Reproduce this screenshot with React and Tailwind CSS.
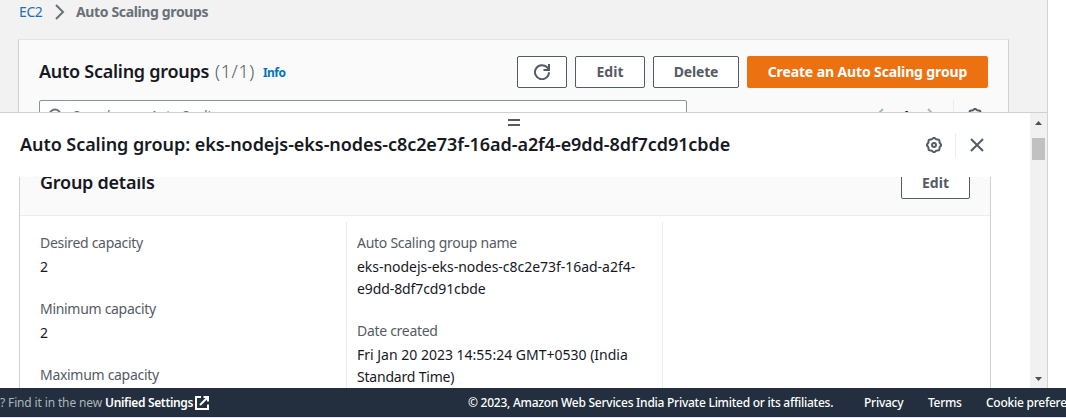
const GEAR_POINTS = Array.from({ length: 64 }, (_, i) => {
  const a = (i / 64) * Math.PI * 2;
  const r = 6.6 + 0.5 * Math.cos(a * 8);
  return `${(8 + r * Math.cos(a)).toFixed(2)},${(8 + r * Math.sin(a)).toFixed(2)}`;
}).join(" ");

function GearIcon() {
  return (
    <svg viewBox="0 0 16 16" className="size-4 shrink-0" fill="none" stroke="#545b64" strokeWidth="2">
      <polygon points={GEAR_POINTS} strokeLinejoin="round" />
      <circle cx="8" cy="8" r="2" />
    </svg>
  );
}

function CloseIcon() {
  return (
    <svg viewBox="0 0 16 16" className="size-4 shrink-0" fill="none" stroke="#545b64" strokeWidth="2">
      <path d="M2 2l12 12M14 2L2 14" />
    </svg>
  );
}

function RefreshIcon() {
  return (
    <svg viewBox="0 0 16 16" className="size-4" fill="none" stroke="#545b64" strokeWidth="2">
      <path d="M15 8.3a7 7 0 1 1-2.2-5.2L15 5.2" />
      <path d="M15 0v6H9.5" />
    </svg>
  );
}

function SearchIcon() {
  return (
    <svg viewBox="0 0 16 16" className="size-4 shrink-0" fill="none" stroke="#687078" strokeWidth="2">
      <circle cx="7" cy="7" r="5.5" />
      <path d="M11 11l4 4" />
    </svg>
  );
}

function Chevron({ className, d }) {
  return (
    <svg viewBox="0 0 16 16" className={className} fill="none" stroke="currentColor" strokeWidth="2">
      <path d={d} />
    </svg>
  );
}

function ExternalIcon() {
  return (
    <svg viewBox="0 0 16 16" className="size-4 shrink-0" fill="none" stroke="#fff" strokeWidth="2">
      <path d="M7 2H2v12h12V9.5" />
      <path d="M9.5 2H14v4.500M14 2L6 10" />
    </svg>
  );
}

function Button({ className, children }) {
  return (
    <button
      className={`flex h-8 items-center justify-center rounded-[2px] border border-[#545b64] bg-white text-sm font-bold text-[#545b64] ${className}`}
    >
      {children}
    </button>
  );
}

function Field({ label, tracking, children }) {
  return (
    <div className="leading-[22px]">
      <div className={`text-[#545b64] ${tracking}`}>{label}</div>
      <div className="mt-0.5">{children}</div>
    </div>
  );
}

export default function App() {
  return (
    <div className="flex h-[418px] w-[1066px] flex-col overflow-hidden bg-white font-['Noto_Sans','Open_Sans',sans-serif] text-sm text-[#16191f]">
      <main className="flex h-[388px] w-[1048px] flex-col border-r border-[#d0d2d3]">
        <section className="flex h-28 shrink-0 flex-col overflow-hidden bg-[#f2f2f2] pl-[18px] pr-[38px]">
          <nav className="flex h-[39px] shrink-0 items-start pl-px leading-6">
            <a className="w-[33px] tracking-[-0.4px] text-[#1f6fb5]">EC2</a>
            <Chevron className="mr-2 mt-1 size-4 text-[#687078]" d="M4 1l7 7-7 7" />
            <span className="font-bold tracking-[-0.36px] text-[#687078]">Auto Scaling groups</span>
          </nav>
          <div className="w-[991px] border border-[#e3e5e5] border-l-[#cdd1d2] border-r-[#cdd1d2] bg-[#fafafa] px-5 pt-4">
            <div className="flex h-8 items-center">
              <h1 className="mb-0.5 text-lg font-semibold tracking-[-0.27px]">Auto Scaling groups</h1>
              <span className="mb-0.5 ml-[6px] text-lg font-light tracking-[0.6px] text-[#545b64]">(1/1)</span>
              <a className="ml-2 mt-0.5 text-xs font-bold tracking-[-0.5px] text-[#0073bb]">Info</a>
              <div className="ml-auto flex gap-2">
                <Button className="w-[50px]"><RefreshIcon /></Button>
                <Button className="w-[70px]">Edit</Button>
                <Button className="w-[86px] tracking-[-0.15px]">Delete</Button>
                <button className="flex h-8 w-[241px] items-center justify-center rounded-[2px] bg-[#ec7211] font-bold tracking-[-0.12px] text-white">
                  Create an Auto Scaling group
                </button>
              </div>
            </div>
            <div className="mt-3 flex h-8">
              <div className="flex w-[648px] items-center rounded-[2px] border border-[#879596] bg-white pl-2 text-[#687078]">
                <SearchIcon />
                <span className="ml-2 italic">Search your Auto Scaling groups</span>
              </div>
              <div className="ml-auto flex items-center pr-[5px]">
                <Chevron className="size-4 text-[#aab7b8]" d="M11 1L4 8l7 7" />
                <span className="mx-[14px] font-bold">1</span>
                <Chevron className="mr-[13px] size-4 text-[#aab7b8]" d="M4 1l7 7-7 7" />
                <span className="mr-[13px] h-8 w-px bg-[#eaeded]" />
                <GearIcon />
              </div>
            </div>
          </div>
        </section>

        <section className="flex h-[276px] shrink-0 border-t border-[#cfd1d1]">
          <div className="flex w-[1030px] flex-col">
            <header className="relative flex h-16 shrink-0 items-center pl-5 pr-[45px]">
              <div className="absolute left-[508px] top-1.5 h-[7px] w-3 border-y-2 border-[#545b64]" />
              <h2 className="mb-0.5 text-lg font-semibold tracking-[-0.065px]">
                Auto Scaling group: eks-nodejs-eks-nodes-c8c2e73f-16ad-a2f4-e9dd-8df7cd91cbde
              </h2>
              <div className="ml-auto flex items-center">
                <GearIcon />
                <span className="ml-[13px] mr-[13px] h-6 w-px bg-[#eaeded]" />
                <CloseIcon />
              </div>
            </header>
            <div className="ml-[19px] flex h-[211px] w-[972px] flex-col overflow-hidden border-x border-[#cfd1d1]">
              <div className="flex h-[39px] shrink-0 items-end justify-between border-b border-[#eaeded] bg-[#fafafa] pb-4 pl-5 pr-5">
                <h3 className="mb-px flex h-8 items-center text-lg font-semibold tracking-[-0.25px]">Group details</h3>
                <Button className="w-[69px]">Edit</Button>
              </div>
              <div className="grid grid-cols-[326px_317px_1fr] pt-1.5">
                <div className="flex h-[190px] flex-col gap-5 pl-5 pt-2.5">
                  <Field label="Desired capacity" tracking="tracking-[-0.3px]">2</Field>
                  <Field label="Minimum capacity" tracking="tracking-[-0.3px]">2</Field>
                  <Field label="Maximum capacity" tracking="tracking-[-0.3px]">2</Field>
                </div>
                <div className="flex h-[190px] flex-col gap-5 border-x border-[#eaeded] pl-2.5 pt-2.5">
                  <Field label="Auto Scaling group name" tracking="tracking-[-0.27px]">
                    <span className="tracking-[-0.03px]">eks-nodejs-eks-nodes-c8c2e73f-16ad-a2f4-</span><br />
                    <span className="tracking-[-0.1px]">e9dd-8df7cd91cbde</span>
                  </Field>
                  <Field label="Date created" tracking="tracking-[-0.3px]">
                    Fri Jan 20 2023 14:55:24 GMT+0530 (India<br />
                    <span className="tracking-[-0.2px]">Standard Time)</span>
                  </Field>
                </div>
              </div>
            </div>
          </div>
          <div className="flex w-[17px] flex-col items-center bg-[#f1f1f1]">
            <svg viewBox="0 0 7 4" className="mt-2 h-1 w-[7px]" fill="#505050"><path d="M3.5 0L7 4H0z" /></svg>
            <div className="mt-[13px] h-[22px] w-[13px] bg-[#c1c1c1]" />
            <svg viewBox="0 0 7 4" className="mb-[7px] mt-auto h-1 w-[7px]" fill="#505050"><path d="M0 0h7L3.5 4z" /></svg>
          </div>
        </section>
      </main>

      <footer className="flex h-[29px] shrink-0 items-center whitespace-nowrap bg-[#232f3e] text-xs font-medium text-white">
        <span className="w-[105px] shrink-0 font-normal tracking-[-0.14px] text-[#aab7b8]">? Find it in the new</span>
        <a className="w-[89px] shrink-0 font-semibold tracking-[-0.33px]">Unified Settings</a>
        <ExternalIcon />
        <span className="ml-[258px] w-[396px] shrink-0 tracking-[-0.25px]">
          © 2023, Amazon Web Services India Private Limited or its affiliates.
        </span>
        <a className="w-16 shrink-0 tracking-[-0.25px]">Privacy</a>
        <a className="w-[58px] shrink-0 tracking-[-0.3px]">Terms</a>
        <a className="shrink-0 tracking-[-0.25px]">Cookie preferences</a>
      </footer>
      <div className="h-px bg-[#dfe3f5]" />
    </div>
  );
}
